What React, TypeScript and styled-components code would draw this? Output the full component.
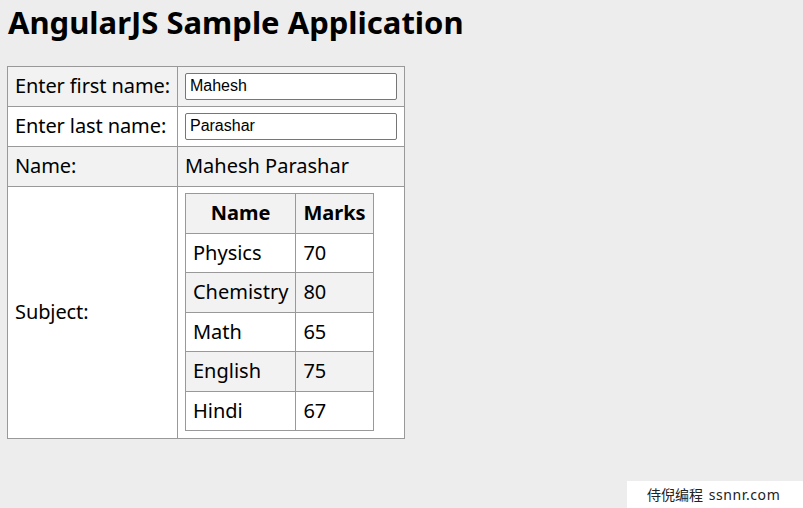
import React from 'react';
import styled, { createGlobalStyle } from 'styled-components';

const GlobalStyle = createGlobalStyle`
  body {
    margin: 0;
    background: #ededed;
    font-family: "Noto Sans", "Open Sans", sans-serif;
    font-size: 20px;
    color: #000;
  }
`;

const Page = styled.div`
  padding: 0 7px;
  min-height: 508px;
  box-sizing: border-box;
`;

const Heading = styled.h2`
  margin: 0 0 24px 1px;
  padding-top: 2px;
  font-size: 31px;
  line-height: 40px;
  font-weight: 700;
`;

const Table = styled.table`
  border-collapse: collapse;
  border: 1px solid #999;
  & tr:nth-child(odd) {
    background: #f2f2f2;
  }
  & tr:nth-child(even) {
    background: #fff;
  }
`;

const Cell = styled.td`
  border: 1px solid #999;
  padding: 6px 7px 7px;
  line-height: 26px;
  text-align: left;
`;

const InnerCell = styled(Cell)`
  padding: 6px 7px 6.5px;
  line-height: 26px;
`;

const Head = styled.th`
  border: 1px solid #999;
  padding: 6px 7px 6.5px;
  line-height: 26px;
  font-weight: 700;
  text-align: center;
`;

const LabelCell = styled(Cell)`
  white-space: nowrap;
  letter-spacing: -0.1px;
`;

const Input = styled.input`
  display: block;
  width: 212px;
  height: 27px;
  margin: 0 0 -1px;
  box-sizing: border-box;
  font-family: "Liberation Sans", Arial, sans-serif;
  font-size: 16px;
  padding: 0 4px 2px;
  border: 1px solid #767676;
  border-radius: 2px;
  background: #fff;
`;

const Watermark = styled.div`
  position: fixed;
  right: 0;
  bottom: 0;
  width: 176px;
  height: 27px;
  background: #fff;
  font-family: "Noto Sans", "Noto Sans CJK SC", sans-serif;
  font-size: 14px;
  line-height: 27px;
  padding-left: 20px;
  box-sizing: border-box;
  color: #222;
  white-space: nowrap;
`;

const Site = styled.span`
  letter-spacing: 0.6px;
  margin-left: 2px;
`;

const subjects = [
  { name: 'Physics', marks: 70 },
  { name: 'Chemistry', marks: 80 },
  { name: 'Math', marks: 65 },
  { name: 'English', marks: 75 },
  { name: 'Hindi', marks: 67 },
];

const App: React.FC = () => {
  return (
    <Page>
      <GlobalStyle />
      <Heading>AngularJS Sample Application</Heading>
      <Table>
        <tbody>
          <tr>
            <LabelCell>Enter first name:</LabelCell>
            <Cell>
              <Input type="text" defaultValue="Mahesh" />
            </Cell>
          </tr>
          <tr>
            <LabelCell>Enter last name:</LabelCell>
            <Cell>
              <Input type="text" defaultValue="Parashar" />
            </Cell>
          </tr>
          <tr>
            <LabelCell>Name:</LabelCell>
            <Cell>Mahesh Parashar</Cell>
          </tr>
          <tr>
            <LabelCell>Subject:</LabelCell>
            <Cell>
              <Table>
                <tbody>
                  <tr>
                    <Head>Name</Head>
                    <Head>Marks</Head>
                  </tr>
                  {subjects.map((s) => (
                    <tr key={s.name}>
                      <InnerCell>{s.name}</InnerCell>
                      <InnerCell>{s.marks}</InnerCell>
                    </tr>
                  ))}
                </tbody>
              </Table>
            </Cell>
          </tr>
        </tbody>
      </Table>
      <Watermark>
        侍倪编程 <Site>ssnnr.com</Site>
      </Watermark>
    </Page>
  );
};

export default App;
